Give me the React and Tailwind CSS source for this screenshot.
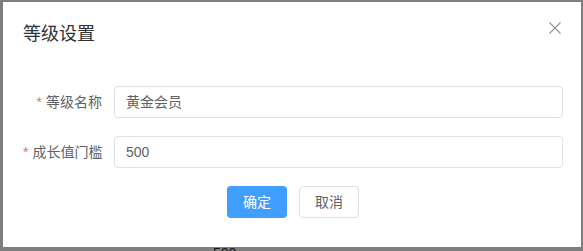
import React from "react";

const font = { fontFamily: '"Liberation Sans", "Noto Sans CJK SC", sans-serif' };

function Row({ label, value }) {
  return (
    <div className="flex items-center h-8">
      <label className="w-[91px] shrink-0 pr-[12px] text-right text-[14px] leading-8 text-[#606266] whitespace-nowrap">
        <span className="text-[#f56c6c] mr-[4px]">*</span>
        {label}
      </label>
      <div className="flex-1 h-8 border border-[#dcdfe6] rounded-[4px] flex items-center pl-[11px] text-[14px] text-[#606266]">
        {value}
      </div>
    </div>
  );
}

export default function App() {
  return (
    <div className="relative w-[583px] h-[251px] overflow-hidden bg-white" style={font}>
      <div className="absolute left-[213px] top-[245px] text-[14px] leading-[16px] text-[#303133]">500</div>
      <div className="absolute inset-0 bg-black/50" />
      <div className="absolute left-[3px] top-[2px] w-[578px] h-[245px] bg-white flex flex-col">
        <div className="relative px-[20px] pt-[20px] pb-[10px]">
          <div className="text-[18px] leading-[24px] text-[#303133]">等级设置</div>
          <svg
            className="absolute right-[20px] top-[20px]"
            width="12"
            height="12"
            viewBox="0 0 12 12"
          >
            <path d="M0.5 0.5L11.5 11.5M11.5 0.5L0.5 11.5" stroke="#909399" strokeWidth="1.1" />
          </svg>
        </div>
        <div className="pt-[30px] pl-[20px] pr-[18px] flex flex-col gap-[18px]">
          <Row label="等级名称" value="黄金会员" />
          <Row label="成长值门槛" value="500" />
          <div className="flex justify-center gap-[12px]">
            <button className="w-[60px] h-8 rounded-[4px] bg-[#409eff] text-white text-[14px]">确定</button>
            <button className="w-[60px] h-8 rounded-[4px] border border-[#dcdfe6] bg-white text-[#606266] text-[14px]">取消</button>
          </div>
        </div>
      </div>
    </div>
  );
}
